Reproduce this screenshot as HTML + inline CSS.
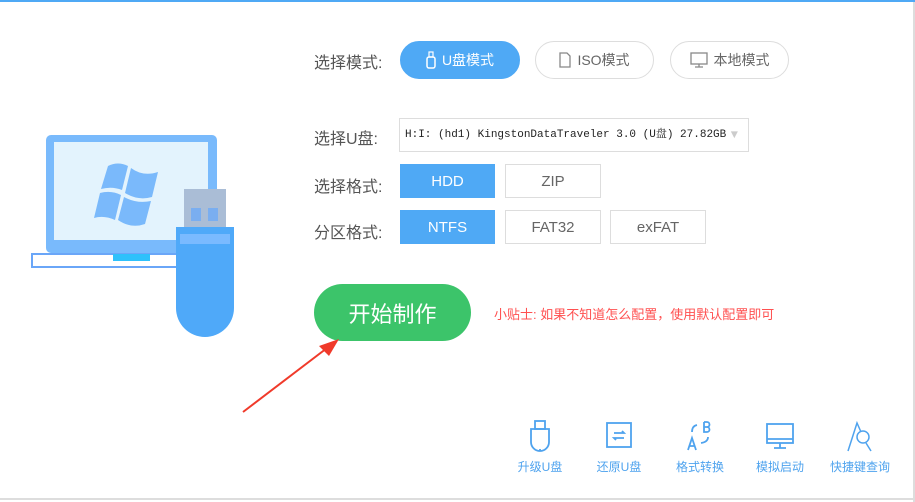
<!DOCTYPE html>
<html><head><meta charset="utf-8"><style>
body{margin:0;width:915px;height:502px;background:#fff;position:relative;overflow:hidden;font-family:"Liberation Sans","Noto Sans CJK SC",sans-serif;}
.a{position:absolute}
.lbl{position:absolute;font-size:16px;color:#555;}
.pill{position:absolute;height:38px;border-radius:20px;box-sizing:border-box;border:1px solid #ddd;color:#666;font-size:14px;display:flex;align-items:center;justify-content:center;gap:6px}
.box{position:absolute;height:34px;box-sizing:border-box;border:1px solid #ddd;color:#666;font-size:15px;display:flex;align-items:center;justify-content:center}
.on{background:#4fa9f5;border-color:#4fa9f5;color:#fff}
.bi{position:absolute;top:420px;width:80px;text-align:center;color:#4fa3ee;font-size:12px}
.bi svg{display:block;margin:0 auto 6px}
</style></head><body>
<div class="a" style="left:0;top:0;width:915px;height:2px;background:#4fa9f5"></div>
<div class="a" style="left:913px;top:2px;width:2px;height:500px;background:#ddd"></div>
<div class="a" style="left:0;top:498px;width:915px;height:2px;background:#ddd"></div>

<svg class="a" style="left:0;top:120px" width="300" height="230">
<rect x="46" y="15" width="171" height="118" rx="5" fill="#79bafc"/>
<rect x="54" y="22" width="154" height="98" fill="#e3f3fd"/>
<g fill="#7ab9fb">
<path d="M108 46 Q118 41 128 46 L122 70 Q112 66 101 69 Z"/>
<path d="M131 48 Q143 57 158 52 L152 77 Q138 81 125 73 Z"/>
<path d="M100 73 Q111 70 121 75 L115 100 Q104 95 94 98 Z"/>
<path d="M124 77 Q137 84 151 81 L145 104 Q131 109 118 100 Z"/>
</g>
<rect x="32" y="134" width="190" height="13" fill="#fff" stroke="#6aa6f8" stroke-width="2"/>
<rect x="113" y="134" width="37" height="7" fill="#2ec1fb"/>
<rect x="184" y="69" width="42" height="40" fill="#aabdd6"/>
<rect x="191" y="88" width="10" height="13" fill="#7aaef0"/><rect x="208" y="88" width="10" height="13" fill="#7aaef0"/>
<path d="M176 107 H234 V188 A29 29 0 0 1 176 188 Z" fill="#4fa9f9"/>
<rect x="180" y="114" width="50" height="10" fill="#7abaff"/>
</svg>

<div class="lbl" style="left:314px;top:49px">选择模式:</div>
<div class="pill on" style="left:400px;top:41px;width:120px"><svg width="10" height="18"><rect x="1" y="6" width="8" height="11" rx="2" fill="none" stroke="#fff" stroke-width="1.5"/><rect x="3" y="1" width="4" height="5" fill="none" stroke="#fff" stroke-width="1.2"/></svg>U盘模式</div>
<div class="pill" style="left:535px;top:41px;width:119px"><svg width="12" height="16"><path d="M1 1H8L11 4V15H1Z" fill="none" stroke="#888" stroke-width="1.3"/></svg>ISO模式</div>
<div class="pill" style="left:670px;top:41px;width:119px"><svg width="18" height="16"><rect x="1" y="1" width="16" height="11" fill="none" stroke="#888" stroke-width="1.3"/><path d="M9 12V15M5 15H13" stroke="#888" stroke-width="1.3"/></svg>本地模式</div>

<div class="lbl" style="left:314px;top:125px">选择U盘:</div>
<div class="a" style="left:399px;top:118px;width:350px;height:34px;box-sizing:border-box;border:1px solid #ddd;font-family:'Liberation Mono','Noto Serif CJK SC',monospace;font-size:11px;color:#222;line-height:32px;padding-left:5px">H:I: (hd1) KingstonDataTraveler 3.0 (U盘) 27.82GB<span style="position:absolute;right:10px;color:#ccc;font-size:12px">▼</span></div>

<div class="lbl" style="left:314px;top:173px">选择格式:</div>
<div class="box on" style="left:400px;top:164px;width:95px">HDD</div>
<div class="box" style="left:505px;top:164px;width:96px">ZIP</div>
<div class="lbl" style="left:314px;top:219px">分区格式:</div>
<div class="box on" style="left:400px;top:210px;width:95px">NTFS</div>
<div class="box" style="left:505px;top:210px;width:96px">FAT32</div>
<div class="box" style="left:610px;top:210px;width:96px">exFAT</div>

<div class="a" style="left:314px;top:284px;width:157px;height:57px;border-radius:29px;background:#3cc46a;color:#fff;font-size:22px;display:flex;align-items:center;justify-content:center">开始制作</div>
<div class="a" style="left:494px;top:304px;color:#ff5050;font-size:13px">小贴士: 如果不知道怎么配置，使用默认配置即可</div>

<svg class="a" style="left:235px;top:330px" width="110" height="90"><path d="M8 82 L96 15" stroke="#f03a2a" stroke-width="2"/><path d="M104 9 L84 16 L94 26 Z" fill="#f03a2a"/></svg>

<div class="bi" style="left:500px"><svg width="24" height="32" fill="none" stroke="#4fa3ee" stroke-width="1.8"><rect x="7" y="1" width="10" height="8"/><path d="M3 9H21V22A9 9 0 0 1 3 22Z M12 31V29"/></svg>升级U盘</div>
<div class="bi" style="left:579px"><svg width="28" height="32" fill="none" stroke="#4fa3ee" stroke-width="1.8"><rect x="2" y="3" width="24" height="24"/><path d="M9 13H19L17 11M19 18H9L11 20"/></svg>还原U盘</div>
<div class="bi" style="left:660px"><svg width="28" height="32" fill="none" stroke="#4fa3ee" stroke-width="1.8"><path d="M2 30L6 18L10 30M3.5 26H8.5M18 2V12H21A2.5 2.5 0 0 0 21 7H18M21 7A2.5 2.5 0 0 0 21 2H18M6 12Q6 6 11 5M22 17Q22 22 15 23"/></svg>格式转换</div>
<div class="bi" style="left:740px"><svg width="30" height="32" fill="none" stroke="#4fa3ee" stroke-width="1.8"><rect x="2" y="4" width="26" height="19"/><path d="M2 19H28M15 23V28M9 28H21"/></svg>模拟启动</div>
<div class="bi" style="left:820px"><svg width="30" height="32" fill="none" stroke="#4fa3ee" stroke-width="1.5"><path d="M3 31L12 3L16 12M26 31L21 23"/><circle cx="18" cy="17" r="6"/></svg>快捷键查询</div>
</body></html>
